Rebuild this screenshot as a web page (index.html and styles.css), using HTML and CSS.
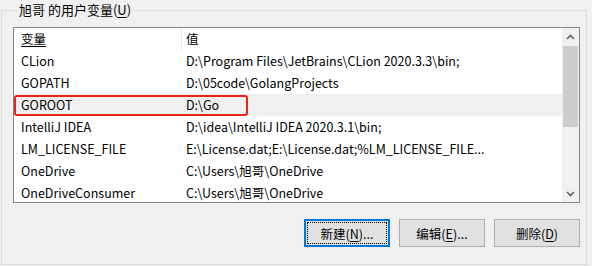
FILE: index.html
```html
<!DOCTYPE html>
<html lang="zh-CN">
<head>
    <meta charset="UTF-8">
    <title>环境变量</title>
    <link rel="stylesheet" href="styles.css">
</head>
<body>
    <fieldset class="group">
        <legend>旭哥 的用户变量(<u>U</u>)</legend>

        <div class="listbox">
            <div class="list-body">
                <div class="row head">
                    <div class="col-name"><u>变量</u></div>
                    <div class="col-value">值</div>
                </div>
                <div class="row">
                    <div class="col-name">CLion</div>
                    <div class="col-value">D:\Program Files\JetBrains\CLion 2020.3.3\bin;</div>
                </div>
                <div class="row">
                    <div class="col-name">GOPATH</div>
                    <div class="col-value">D:\05code\GolangProjects</div>
                </div>
                <div class="row selected">
                    <div class="col-name">GOROOT</div>
                    <div class="col-value">D:\Go</div>
                    <span class="mark"></span>
                </div>
                <div class="row">
                    <div class="col-name">IntelliJ IDEA</div>
                    <div class="col-value">D:\idea\IntelliJ IDEA 2020.3.1\bin;</div>
                </div>
                <div class="row">
                    <div class="col-name">LM_LICENSE_FILE</div>
                    <div class="col-value">E:\License.dat;E:\License.dat;%LM_LICENSE_FILE...</div>
                </div>
                <div class="row">
                    <div class="col-name">OneDrive</div>
                    <div class="col-value">C:\Users\旭哥\OneDrive</div>
                </div>
                <div class="row">
                    <div class="col-name">OneDriveConsumer</div>
                    <div class="col-value">C:\Users\旭哥\OneDrive</div>
                </div>
            </div>

            <div class="scrollbar">
                <div class="arrow">
                    <svg width="9" height="6" viewBox="0 0 9 6"><path d="M1 5 L4.5 1.5 L8 5" fill="none" stroke="#606060" stroke-width="1.6"/></svg>
                </div>
                <div class="track">
                    <div class="thumb"></div>
                </div>
                <div class="arrow">
                    <svg width="9" height="6" viewBox="0 0 9 6"><path d="M1 1 L4.5 4.5 L8 1" fill="none" stroke="#606060" stroke-width="1.6"/></svg>
                </div>
            </div>
        </div>

        <div class="buttons">
            <button class="btn default"><span>新建(<u>N</u>)...</span></button>
            <button class="btn"><span>编辑(<u>E</u>)...</span></button>
            <button class="btn"><span>删除(<u>D</u>)</span></button>
        </div>
    </fieldset>
</body>
</html>
```

FILE: styles.css
```css
* {
    margin: 0;
    padding: 0;
    box-sizing: border-box;
}

body {
    width: 592px;
    height: 266px;
    background: #f0f0f0;
    color: #000;
    font-family: "Noto Sans CJK SC", "Noto Sans", sans-serif;
    font-size: 12.5px;
    overflow: hidden;
}

u {
    text-decoration: underline;
    text-underline-offset: 2px;
}

.group {
    margin: 1px 5px 1px 1px;
    height: 264px;
    border: 1px solid #dcdcdc;
    padding: 0 6px 0 11px;
}

.group legend {
    margin-left: 4px;
    padding: 0 2px;
    font-size: 13px;
    line-height: 18px;
}

.listbox {
    margin-top: 8px;
    height: 176px;
    border: 1px solid #828790;
    background: #fff;
    display: flex;
}

.list-body {
    flex: 1;
    overflow: hidden;
}

.row {
    position: relative;
    display: flex;
    height: 22px;
    line-height: 22px;
    white-space: nowrap;
}

.row.selected {
    background: #f0f0f0;
}

.col-name {
    width: 168px;
    padding-left: 7px;
}

.head .col-name {
    border-right: 1px solid #e5e5e5;
}

.col-value {
    padding-left: 4px;
}

.mark {
    position: absolute;
    left: 0;
    top: 1px;
    width: 234px;
    height: 21px;
    border: 2px solid #e8231c;
    border-radius: 3px;
}

.scrollbar {
    width: 17px;
    background: #f0f0f0;
    display: flex;
    flex-direction: column;
}

.arrow {
    height: 17px;
    display: flex;
    align-items: center;
    justify-content: center;
}

.track {
    flex: 1;
    padding: 1px;
}

.thumb {
    height: 81px;
    background: #cdcdcd;
}

.buttons {
    margin-top: 16px;
    display: flex;
    justify-content: flex-end;
    gap: 9px;
}

.btn {
    width: 86px;
    height: 28px;
    background: #e1e1e1;
    border: 1px solid #adadad;
    font-family: inherit;
    font-size: 12.5px;
    color: #000;
}

.btn.default {
    border: 2px solid #0078d7;
    padding: 1px;
}

.btn.default span {
    display: flex;
    align-items: center;
    justify-content: center;
    height: 100%;
    border: 1px dotted #000;
}
```
